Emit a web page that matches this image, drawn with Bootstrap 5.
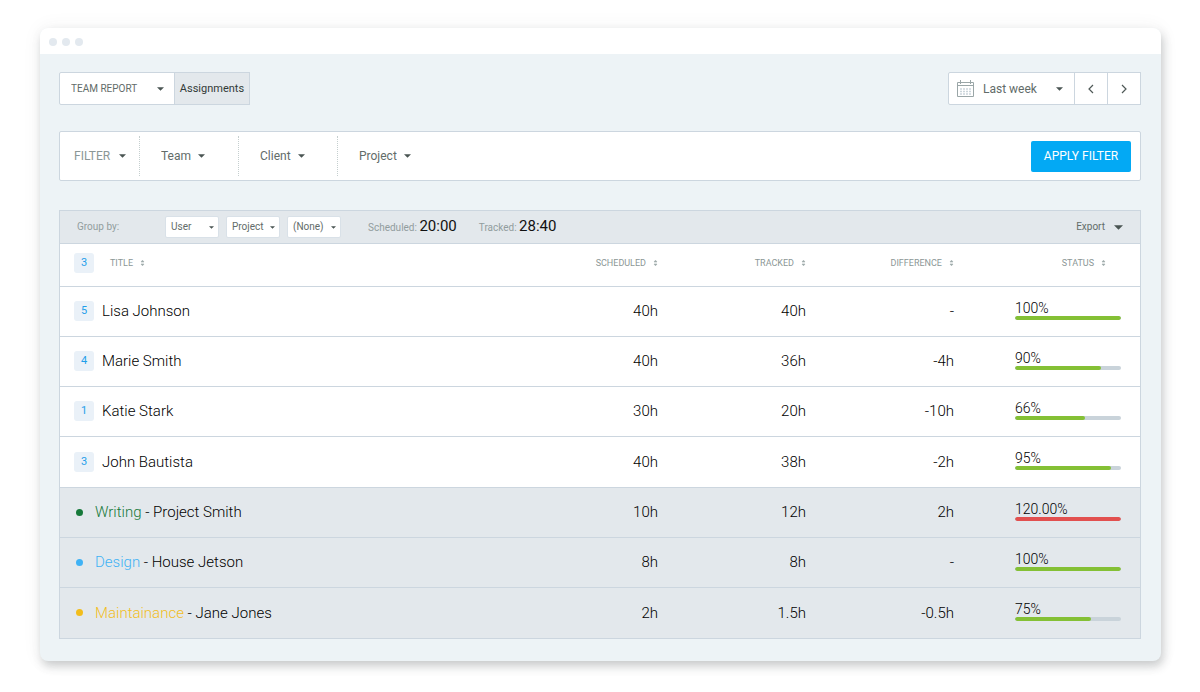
<!DOCTYPE html>
<html lang="en">
<head>
<meta charset="utf-8">
<meta name="viewport" content="width=device-width, initial-scale=1">
<title>Team report</title>
<link href="https://cdn.jsdelivr.net/npm/bootstrap@5.3.0/dist/css/bootstrap.min.css" rel="stylesheet">
<style>
:root { --line: #ccd6df; --panel: #e3e8ec; --canvas: #edf3f6; --muted: #8b9796; --ink: #626c69; }
body { font-family: Roboto, "Liberation Sans", sans-serif; font-size: 12px; line-height: 16px; color: #000; background: #fff; }
.app-window { margin: 28px 39px 28px 40px; border-radius: 8px; background: var(--canvas); box-shadow: 2px 5px 10px rgba(60, 70, 75, .26), 0 0 20px rgba(60, 70, 75, .06); }
.title-bar { height: 26px; gap: 5px; padding: 1px 9px 0; background: #fff; border-radius: 8px 8px 0 0; }
.title-bar i { width: 8px; height: 8px; border-radius: 50%; background: #e3e9ef; }
.content { padding: 18px 20px 22px 19px; }
.pick { appearance: none; border: 0; border-radius: 0; color: var(--ink); background: #fff url("data:image/svg+xml,%3Csvg xmlns='http://www.w3.org/2000/svg' viewBox='0 0 8 4'%3E%3Cpath fill='%234a5553' d='M0 0h8L4 4z'/%3E%3C/svg%3E") no-repeat right 8px center / 7px 4px; }
.btn { --bs-btn-font-size: 12px; --bs-btn-line-height: 16px; --bs-btn-border-radius: 0; --bs-btn-padding-x: 0; --bs-btn-padding-y: 0; }
.bar-top { margin-bottom: 26px; }
.boxed { height: 33px; border: 1px solid var(--line); background-color: #fff; }
.tab-report { width: 116px; padding-left: 11px; font-size: 10px; border-radius: 2px 0 0 2px; background-position: right 10px center; }
.tab-active { --bs-btn-font-size: 11px; width: 76px; margin-left: -1px; color: #323a38; background: var(--panel); }
.period { width: 127px; border-radius: 2px 0 0 2px; }
.period svg { margin-left: 8px; }
.period .pick { padding-left: 9px; height: 31px; background-position: right 11px center; }
.step { width: 34px; margin-left: -1px; }
.filters { height: 50px; padding: 4px 9px 4px 14px; border: 1px solid var(--line); border-radius: 2px; background: #fff; margin-bottom: 29px; }
.filters .pick { height: 40px; padding-right: 14px; background-position: right 0 center; }
.filters .cell { width: 99px; padding-left: 21px; border-left: 1px dotted #c5cfcf; }
.filters .first { width: 65px; }
.filters .first .pick { color: var(--muted); padding-right: 15px; }
.apply { width: 100px; height: 31px; color: #fff; background: #03a9f4; border-radius: 2px; }
.report { border: 1px solid var(--line); background: #fff; }
.toolbar { height: 33px; padding: 0 16px 0 17px; background: var(--panel); border-bottom: 1px solid var(--line); color: #929d9e; font-size: 10px; }
.toolbar .group-label { width: 88px; }
.toolbar .pick { width: 54px; height: 22px; margin-right: 7px; padding-left: 5px; border: 1px solid #d9e1e8; border-radius: 2px; background-position: right 4px center; background-size: 5px 3px; }
.toolbar b { font-size: 15px; font-weight: 400; color: #111; }
.totals { gap: 22px; margin-left: 20px; }
.export { --bs-btn-font-size: 10px; --bs-btn-color: #626c69; gap: 9px; }
.grid { width: 100%; table-layout: fixed; border-collapse: separate; border-spacing: 0; }
.grid th, .grid td { padding: 0; font-weight: 300; text-align: right; vertical-align: middle; border-bottom: 1px solid var(--line); }
.grid th:first-child, .grid td:first-child { text-align: left; padding-left: 14px; }
.grid thead th { height: 43px; padding-bottom: 5px; font-size: 9px; font-weight: 400; color: var(--muted); }
.grid td { height: 50px; padding-bottom: 1px; font-size: 15px; }
.people tr:last-child td { height: 51px; }
.tasks { background: var(--panel); }
.tasks tr:last-child td { border-bottom: 0; }
.w-num { width: 148px; }
.w-state { width: 186px; }
.grid td.state { padding: 0 19px 4px 61px; text-align: left; font-size: 14px; }
.grid th.state { padding-right: 34px; }
.tally { width: 20px; height: 20px; border-radius: 3px; background: #eaf1f8; color: #1f9fea; font-size: 11px; font-weight: 400; line-height: 20px; text-align: center; }
.sort { color: inherit; font-size: 9px; line-height: 12px; padding: 0; border: 0; background: none; }
.sort svg { margin-left: 7px; vertical-align: -1px; }
.dot { width: 7px; height: 7px; margin: 0 12px 0 2px; border-radius: 50%; background: currentColor; }
.writing { color: #16793a; } .design { color: #3fb2f5; } .upkeep { color: #f2bd1c; }
.progress { height: 4px; background: #c9d3da; border-radius: 2px; --bs-progress-bar-bg: #84c035; }
.progress-bar { border-radius: 2px; }
.over { --bs-progress-bar-bg: #e2504f; }
</style>
</head>
<body>
<svg class="d-none">
  <symbol id="sort" viewBox="0 0 5 8"><path d="M1 3l1.5-1.8L4 3zM1 5l1.5 1.8L4 5z" fill="#a0abab" stroke="#a0abab" stroke-width=".6"/></symbol>
</svg>
<main class="app-window">
  <div class="title-bar d-flex align-items-center"><i></i><i></i><i></i></div>
  <div class="content">
    <div class="bar-top d-flex justify-content-between">
      <div class="d-flex">
        <select class="pick boxed tab-report" aria-label="Report"><option>TEAM REPORT</option></select>
        <button class="btn boxed tab-active" type="button">Assignments</button>
      </div>
      <div class="d-flex">
        <div class="boxed period d-flex align-items-center">
          <svg width="17" height="17" viewBox="0 0 17 17" fill="none" stroke="#9aa6a7" class="flex-shrink-0"><path d="M.5 2.5h16v14H.5zM.5 5.5h16M3.5 0v4M13.5 0v4"/><path d="M3 9h11M3 11.5h11M3 14h11" stroke="#cbd5db" stroke-width="1.5" stroke-dasharray="2 1"/></svg>
          <select class="pick flex-grow-1" aria-label="Period"><option>Last week</option></select>
        </div>
        <button class="btn boxed step" type="button" aria-label="Previous"><svg width="6" height="10" viewBox="0 0 6 10" fill="none" stroke="#4f5957" stroke-width="1.2"><path d="M5 1L1 5l4 4"/></svg></button>
        <button class="btn boxed step" type="button" aria-label="Next"><svg width="6" height="10" viewBox="0 0 6 10" fill="none" stroke="#4f5957" stroke-width="1.2"><path d="M1 1l4 4-4 4"/></svg></button>
      </div>
    </div>
    <div class="filters d-flex align-items-center">
      <div class="first"><select class="pick" aria-label="Filter"><option>FILTER</option></select></div>
      <div class="cell"><select class="pick" aria-label="Team"><option>Team</option></select></div>
      <div class="cell"><select class="pick" aria-label="Client"><option>Client</option></select></div>
      <div class="cell"><select class="pick" aria-label="Project"><option>Project</option></select></div>
      <button class="btn apply ms-auto" type="button">APPLY FILTER</button>
    </div>
    <section class="report">
      <div class="toolbar d-flex align-items-center">
        <label class="group-label" for="group-first">Group by:</label>
        <select class="pick" id="group-first"><option>User</option></select>
        <select class="pick" aria-label="Then by"><option>Project</option></select>
        <select class="pick" aria-label="And by"><option>(None)</option></select>
        <div class="totals d-flex">
          <span>Scheduled: <b>20:00</b></span>
          <span>Tracked: <b>28:40</b></span>
        </div>
        <button class="btn export ms-auto d-flex align-items-center" type="button">Export <svg width="9" height="5" viewBox="0 0 8 4"><path fill="#4a5553" d="M0 0h8L4 4z"/></svg></button>
      </div>
      <table class="grid">
        <colgroup><col><col class="w-num"><col class="w-num"><col class="w-num"><col class="w-state"></colgroup>
        <thead><tr>
          <th><div class="d-flex align-items-center"><span class="tally">3</span><button type="button" class="sort ms-3">TITLE<svg width="5" height="8"><use href="#sort"/></svg></button></div></th>
          <th><button type="button" class="sort">SCHEDULED<svg width="5" height="8"><use href="#sort"/></svg></button></th>
          <th><button type="button" class="sort">TRACKED<svg width="5" height="8"><use href="#sort"/></svg></button></th>
          <th><button type="button" class="sort">DIFFERENCE<svg width="5" height="8"><use href="#sort"/></svg></button></th>
          <th class="state"><button type="button" class="sort">STATUS<svg width="5" height="8"><use href="#sort"/></svg></button></th>
        </tr></thead>
        <tbody class="people">
          <tr><td><div class="d-flex align-items-center"><span class="tally">5</span><span class="ms-2">Lisa Johnson</span></div></td><td>40h</td><td>40h</td><td>-</td><td class="state">100%<div class="progress"><div class="progress-bar" style="width:100%"></div></div></td></tr>
          <tr><td><div class="d-flex align-items-center"><span class="tally">4</span><span class="ms-2">Marie Smith</span></div></td><td>40h</td><td>36h</td><td>-4h</td><td class="state">90%<div class="progress"><div class="progress-bar" style="width:81%"></div></div></td></tr>
          <tr><td><div class="d-flex align-items-center"><span class="tally">1</span><span class="ms-2">Katie Stark</span></div></td><td>30h</td><td>20h</td><td>-10h</td><td class="state">66%<div class="progress"><div class="progress-bar" style="width:66%"></div></div></td></tr>
          <tr><td><div class="d-flex align-items-center"><span class="tally">3</span><span class="ms-2">John Bautista</span></div></td><td>40h</td><td>38h</td><td>-2h</td><td class="state">95%<div class="progress"><div class="progress-bar" style="width:91%"></div></div></td></tr>
        </tbody>
        <tbody class="tasks">
          <tr><td><div class="d-flex align-items-center"><span class="dot writing"></span><span><span class="writing">Writing</span> - Project Smith</span></div></td><td>10h</td><td>12h</td><td>2h</td><td class="state">120.00%<div class="progress over"><div class="progress-bar" style="width:100%"></div></div></td></tr>
          <tr><td><div class="d-flex align-items-center"><span class="dot design"></span><span><span class="design">Design</span> - House Jetson</span></div></td><td>8h</td><td>8h</td><td>-</td><td class="state">100%<div class="progress"><div class="progress-bar" style="width:100%"></div></div></td></tr>
          <tr><td><div class="d-flex align-items-center"><span class="dot upkeep"></span><span><span class="upkeep">Maintainance</span> - Jane Jones</span></div></td><td>2h</td><td>1.5h</td><td>-0.5h</td><td class="state">75%<div class="progress"><div class="progress-bar" style="width:72%"></div></div></td></tr>
        </tbody>
      </table>
    </section>
  </div>
</main>
<script src="https://cdn.jsdelivr.net/npm/bootstrap@5.3.0/dist/js/bootstrap.bundle.min.js"></script>
</body>
</html>
